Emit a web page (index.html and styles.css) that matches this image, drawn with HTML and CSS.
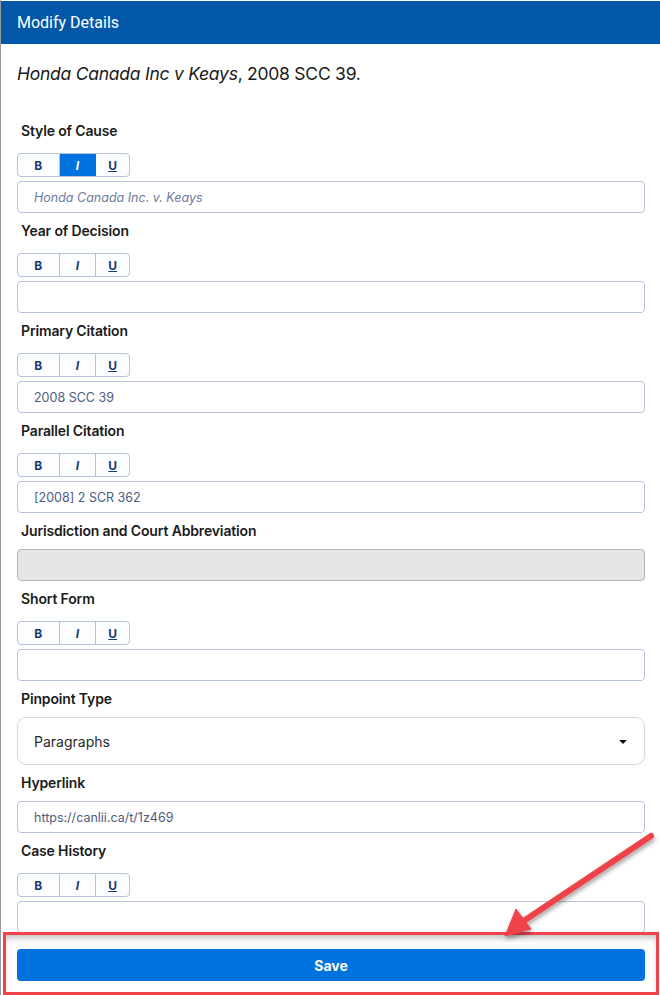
FILE: index.html
```html
<!DOCTYPE html>
<html>
<head>
<meta charset="utf-8">
<link rel="stylesheet" href="styles.css">
</head>
<body>
<div class="panel">
  <div class="header">Modify Details</div>
  <div class="content">
    <p class="citation"><i>Honda Canada Inc v Keays</i>, 2008 SCC 39.</p>

    <div class="field">
      <div class="label">Style of Cause</div>
      <div class="toolbar"><span class="tb b">B</span><span class="tb i active">I</span><span class="tb u">U</span></div>
      <div class="input placeholder">Honda Canada Inc. v. Keays</div>
    </div>

    <div class="field">
      <div class="label">Year of Decision</div>
      <div class="toolbar"><span class="tb b">B</span><span class="tb i">I</span><span class="tb u">U</span></div>
      <div class="input"></div>
    </div>

    <div class="field">
      <div class="label">Primary Citation</div>
      <div class="toolbar"><span class="tb b">B</span><span class="tb i">I</span><span class="tb u">U</span></div>
      <div class="input">2008 SCC 39</div>
    </div>

    <div class="field">
      <div class="label">Parallel Citation</div>
      <div class="toolbar"><span class="tb b">B</span><span class="tb i">I</span><span class="tb u">U</span></div>
      <div class="input">[2008] 2 SCR 362</div>
    </div>

    <div class="field">
      <div class="label plain">Jurisdiction and Court Abbreviation</div>
      <div class="input disabled"></div>
    </div>

    <div class="field">
      <div class="label">Short Form</div>
      <div class="toolbar"><span class="tb b">B</span><span class="tb i">I</span><span class="tb u">U</span></div>
      <div class="input"></div>
    </div>

    <div class="field">
      <div class="label plain">Pinpoint Type</div>
      <div class="select"><span>Paragraphs</span><span class="caret"></span></div>
    </div>

    <div class="field">
      <div class="label plain">Hyperlink</div>
      <div class="input">https://canlii.ca/t/1z469</div>
    </div>

    <div class="field">
      <div class="label">Case History</div>
      <div class="toolbar"><span class="tb b">B</span><span class="tb i">I</span><span class="tb u">U</span></div>
      <div class="input"></div>
    </div>
  </div>

  <div class="footer">
    <button class="save">Save</button>
  </div>
</div>

<svg class="arrow" width="200" height="140" viewBox="460 820 200 140">
  <defs>
    <filter id="sh" x="-20%" y="-20%" width="140%" height="140%">
      <feDropShadow dx="1" dy="3" stdDeviation="2" flood-color="#000" flood-opacity="0.35"/>
    </filter>
  </defs>
  <g filter="url(#sh)" fill="#f0434b" stroke="#f0434b">
    <line x1="651" y1="836" x2="522" y2="922" stroke-width="6" stroke-linecap="round"/>
    <polygon points="505,936 516,909 531,929" stroke-width="1" stroke-linejoin="round"/>
  </g>
</svg>
</body>
</html>
```
FILE: styles.css
```css
html, body {
  margin: 0;
  padding: 0;
  background: #fff;
}
body {
  font-family: Inter, Roboto, "Liberation Sans", sans-serif;
  width: 660px;
  height: 995px;
  overflow: hidden;
  position: relative;
}
.panel {
  border-left: 1px solid #9a9a9a;
  height: 995px;
  box-sizing: border-box;
  padding-top: 1px;
}
.header {
  background: #0158a8;
  color: #fff;
  font-family: Roboto, "Liberation Sans", sans-serif;
  font-size: 16px;
  height: 43px;
  line-height: 43px;
  padding-left: 16px;
}
.content {
  padding: 0 15px 0 16px;
}
.citation {
  margin: 0;
  padding-top: 19px;
  font-size: 17.5px;
  line-height: 22px;
  color: #1a1a1a;
  height: 59px;
  letter-spacing: -0.25px;
}
.field {
  padding-bottom: 9px;
}
.label {
  font-size: 14px;
  font-weight: 600;
  line-height: 17px;
  color: #1b1b1b;
  margin-left: 4px;
  margin-bottom: 14px;
  letter-spacing: -0.15px;
}
.label.plain {
  margin-bottom: 10px;
}
.toolbar {
  display: flex;
  width: 113px;
  border: 1px solid #b6c3da;
  border-radius: 4px;
  height: 24px;
  box-sizing: border-box;
  overflow: hidden;
  margin-bottom: 4px;
  background: #fbfdff;
}
.tb {
  display: flex;
  align-items: center;
  justify-content: center;
  font-size: 12px;
  font-weight: 700;
  color: #1d3a70;
  border-right: 1px solid #b6c3da;
}
.tb.b { width: 41px; }
.tb.i { width: 36px; font-style: italic; }
.tb.u { width: 33px; text-decoration: underline; border-right: none; }
.tb.active {
  background: #0073de;
  color: #fff;
  border-right-color: #0073de;
}
.input {
  height: 32px;
  box-sizing: border-box;
  border: 1px solid #b6c3da;
  border-radius: 4px;
  padding: 0 16px;
  display: flex;
  align-items: center;
  font-size: 12.5px;
  color: #4d5c7e;
}
.input.placeholder {
  font-style: italic;
  color: #6b7a9c;
}
.input.disabled {
  background: #e6e6e6;
  border-color: #b4b4b4;
}
.select {
  height: 48px;
  box-sizing: border-box;
  border: 1px solid #d4d8de;
  border-radius: 9px;
  display: flex;
  align-items: center;
  justify-content: space-between;
  padding: 0 17px 0 16px;
  font-size: 14px;
  color: #2a2a2a;
}
.caret {
  width: 0;
  height: 0;
  border-left: 4px solid transparent;
  border-right: 4px solid transparent;
  border-top: 4px solid #111;
  margin-top: 2px;
}
.footer {
  position: absolute;
  left: 3px;
  top: 932px;
  width: 656px;
  height: 63px;
  box-sizing: border-box;
  border: 3px solid #f1434b;
  background: #fff;
  box-shadow: inset 0 5px 6px -2px rgba(0,0,0,0.25);
  padding: 14px 11px 0 11px;
}
.save {
  display: block;
  width: 100%;
  height: 32px;
  border: none;
  border-radius: 4px;
  background: #0073de;
  color: #fff;
  font-family: Inter, Roboto, "Liberation Sans", sans-serif;
  font-size: 14px;
  font-weight: 700;
}
.arrow {
  position: absolute;
  left: 460px;
  top: 820px;
}
```
